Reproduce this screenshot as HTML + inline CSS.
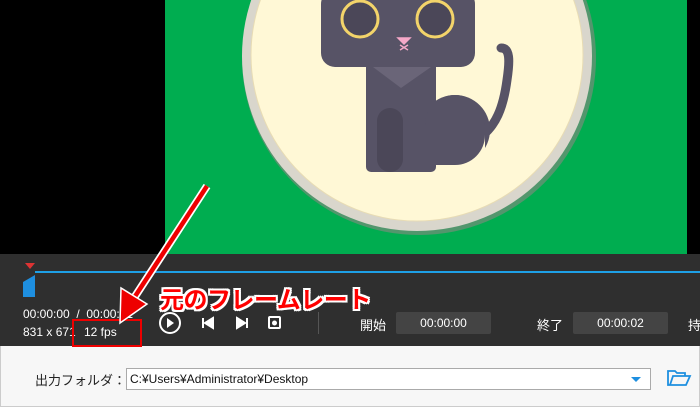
<!DOCTYPE html>
<html><head><meta charset="utf-8"><style>
body{margin:0;width:700px;height:407px;overflow:hidden;background:#f7f7f7;font-family:"Liberation Sans","Noto Sans CJK JP",sans-serif;position:relative}
.a{position:absolute}
.w{color:#fff;font-size:12px}
</style></head><body>
<div class="a" style="left:0;top:0;width:700px;height:254px;background:#000"></div>
<svg class="a" style="left:165px;top:0" width="522" height="254">
<rect width="522" height="254" fill="#00ad50"/>
<circle cx="254" cy="58" r="177" fill="#8a8780" opacity=".6"/>
<circle cx="252" cy="56" r="175" fill="#d9d6cc"/>
<circle cx="252" cy="55" r="166" fill="#fff8d6" stroke="#e8dcb4" stroke-width="1"/>
<path d="M336 48 C345 48 345 60 342 80 C338 110 330 125 318 135" stroke="#575366" stroke-width="9" fill="none" stroke-linecap="round"/>
<circle cx="290" cy="130" r="35" fill="#575366"/>
<rect x="290" y="130" width="30" height="35" fill="#fff8d6"/>
<rect x="201" y="60" width="70" height="112" rx="5" fill="#575366"/>
<rect x="260" y="95" width="60" height="70" rx="30" fill="#575366"/>
<rect x="260" y="130" width="30" height="35" fill="#575366"/>
<rect x="212" y="108" width="26" height="64" rx="13" fill="#4b4758"/>
<path d="M208 67 L236 88 L266 67Z" fill="#6a6578"/>
<rect x="156" y="-10" width="154" height="77" rx="14" fill="#575366"/>
<circle cx="195" cy="19" r="18" fill="#4b4758" stroke="#f3d46a" stroke-width="3"/>
<circle cx="270" cy="19" r="18" fill="#4b4758" stroke="#f3d46a" stroke-width="3"/>
<path d="M233 38 L245 38 L239 44Z M235 45 L243 50 M243 45 L235 50" stroke="#f6a8c8" fill="#f6a8c8" stroke-width="1.5"/>
</svg>
<div class="a" style="left:0;top:254px;width:700px;height:92px;background:#2f2f2f"></div>
<div class="a" style="left:35px;top:271px;width:665px;height:2px;background:#1ea0e6"></div>
<svg class="a" style="left:22px;top:262px" width="16" height="36"><path d="M8 7 L3 1 L13 1Z" fill="#d33"/><path d="M1 26 L1 20 L13 13 L13 35 L1 35Z" fill="#1e8fe0"/></svg>
<div class="a w" style="left:23px;top:307px">00:00:00&nbsp; / &nbsp;00:00:01</div>
<div class="a w" style="left:23px;top:325px">831 x 671</div>
<div class="a w" style="left:84px;top:325px">12 fps</div>
<div class="a" style="left:72px;top:319px;width:70px;height:28px;border:2px solid #e00;box-sizing:border-box"></div>
<svg class="a" style="left:158px;top:310px" width="130" height="26">
<circle cx="12" cy="13" r="10" stroke="#fff" stroke-width="2" fill="none"/><path d="M9 8 L16 13 L9 18Z" fill="#fff"/>
<path d="M45 8 v10 M55 8 L47 13 L55 18Z" stroke="#fff" stroke-width="2" fill="#fff"/>
<path d="M79 8 L87 13 L79 18Z M89 8 v10" stroke="#fff" stroke-width="2" fill="#fff"/>
<rect x="111" y="7" width="11" height="11" rx="1" stroke="#fff" stroke-width="2" fill="none"/><circle cx="116.5" cy="13" r="2.5" fill="#fff"/>
</svg>
<div class="a" style="left:318px;top:312px;width:1px;height:22px;background:#555"></div>
<div class="a w" style="left:360px;top:315px;font-size:13px">開始</div>
<div class="a w" style="left:396px;top:312px;width:95px;height:22px;background:#444;line-height:22px;text-align:center;border-radius:2px">00:00:00</div>
<div class="a w" style="left:537px;top:315px;font-size:13px">終了</div>
<div class="a w" style="left:573px;top:312px;width:95px;height:22px;background:#444;line-height:22px;text-align:center;border-radius:2px">00:00:02</div>
<div class="a w" style="left:688px;top:315px;font-size:13px">持</div>
<svg class="a" style="left:0;top:0" width="700" height="350"><path d="M207 186 L134 298" stroke="#fff" stroke-width="8"/><path d="M207 186 L134 298" stroke="#e00" stroke-width="4.5"/><path d="M120 323 L121 288 L147 304Z" fill="#e00" stroke="#fff" stroke-width="1.5"/></svg>
<div class="a" style="left:160px;top:280px;font-size:24px;font-weight:bold;color:#f00;text-shadow:2px 0 #fff,-2px 0 #fff,0 2px #fff,0 -2px #fff,2px 2px #fff,-2px -2px #fff,2px -2px #fff,-2px 2px #fff;letter-spacing:-0.5px">元のフレームレート</div>
<div class="a" style="left:0;top:346px;width:700px;height:61px;border:1px solid #ccc;border-top:none;box-sizing:border-box"></div>
<div class="a" style="left:35px;top:370px;font-size:13px;color:#222">出力フォルダ：</div>
<div class="a" style="left:126px;top:368px;width:525px;height:22px;border:1px solid #aaa;background:#fff;box-sizing:border-box;font-size:12px;color:#111;line-height:20px;padding-left:3px">C:¥Users¥Administrator¥Desktop</div>
<svg class="a" style="left:628px;top:373px" width="16" height="12"><path d="M3 4 L13 4 L8 9Z" fill="#1e8fe0"/></svg>
<svg class="a" style="left:666px;top:369px" width="26" height="18"><path d="M2 4 L2 16 L20 16 L24 7 L7 7 L4 16 M2 4 L2 2 L9 2 L11 4 L19 4 L19 7" stroke="#1e8fe0" stroke-width="1.8" fill="none"/></svg>
</body></html>
